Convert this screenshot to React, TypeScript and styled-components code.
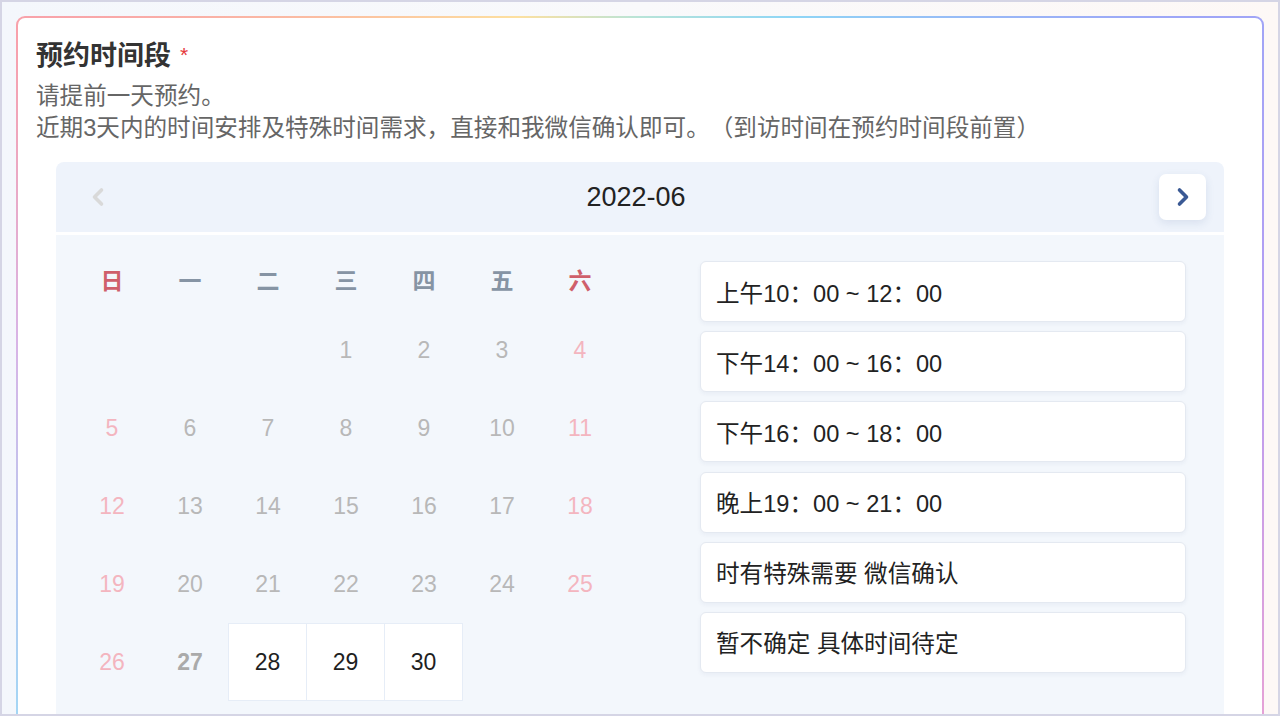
import React from 'react';
import styled, { createGlobalStyle } from 'styled-components';

// Global reset
const GlobalStyle = createGlobalStyle`
  * { box-sizing: border-box; }
  html, body { margin: 0; padding: 0; }
  body {
    font-family: "Liberation Sans", "Noto Sans CJK SC", sans-serif;
    background: #ffffff;
    text-spacing-trim: space-all;
  }
`;

// Typescript types
type DayKind = 'empty' | 'past' | 'today' | 'open';

interface DayCell {
  day?: number;
  kind: DayKind;
  weekend: boolean;
}

const weekDays: string[] = ['日', '一', '二', '三', '四', '五', '六'];

const slots: string[] = [
  '上午10：00 ~ 12：00',
  '下午14：00 ~ 16：00',
  '下午16：00 ~ 18：00',
  '晚上19：00 ~ 21：00',
  '时有特殊需要 微信确认',
  '暂不确定 具体时间待定',
];

// June 2022 starts on a Wednesday
const buildDays = (): DayCell[] => {
  const cells: DayCell[] = [];
  for (let i = 0; i < 3; i++) cells.push({ kind: 'empty', weekend: i === 0 });
  for (let d = 1; d <= 30; d++) {
    const col = (d + 2) % 7;
    let kind: DayKind = 'past';
    if (d === 27) kind = 'today';
    if (d > 27) kind = 'open';
    cells.push({ day: d, kind, weekend: col === 0 || col === 6 });
  }
  return cells;
};

// Styled-components
const Frame = styled.div`
  width: 100vw;
  height: 716px;
  overflow: hidden;
  border: 2px solid #d5d5e5;
  padding: 14px 14px 0;
  background: linear-gradient(90deg, #f4f7fc 0%, #f9f9fb 50%, #fdf8f6 100%);
`;

const Card = styled.section`
  min-height: 760px;
  border: 2px solid transparent;
  border-radius: 9px;
  padding: 19px 18px 0;
  background:
    linear-gradient(#ffffff, #ffffff) padding-box,
    conic-gradient(
      from 0deg at 50% 50%,
      #b8e4d8 0deg,
      #8fd6f6 22deg,
      #9ea6f7 55deg,
      #b79cf2 85deg,
      #e6a2d6 118deg,
      #f3a9bf 160deg,
      #f0b4c8 200deg,
      #9fd9f6 240deg,
      #d8b4e6 275deg,
      #f8a0ab 300deg,
      #fcc6a0 325deg,
      #fde0a0 342deg,
      #b8e4d8 360deg
    ) border-box;
`;

const Title = styled.h2`
  margin: 0;
  font-size: 27px;
  line-height: 36px;
  font-weight: 700;
  color: #333333;
`;

const Required = styled.span`
  color: #e5383b;
  font-size: 21px;
  font-weight: 400;
  margin-left: 9px;
  vertical-align: 3px;
`;

const Hint = styled.p`
  margin: 6px 0 0;
  font-size: 23.6px;
  line-height: 32px;
  color: #666666;
`;

const Calendar = styled.div`
  margin: 18px 20px 0;
`;

const CalHeader = styled.div`
  height: 70px;
  display: flex;
  align-items: center;
  justify-content: space-between;
  padding: 0 18px;
  background: #eef3fb;
  border-radius: 8px 8px 0 0;
`;

const MonthLabel = styled.div`
  font-size: 27px;
  color: #222222;
  margin-right: 8px;
`;

const NavButton = styled.button<{ $active?: boolean }>`
  width: 47px;
  height: 46px;
  display: flex;
  align-items: center;
  justify-content: center;
  border: none;
  border-radius: 7px;
  padding: 0;
  background: ${(p) => (p.$active ? '#ffffff' : 'transparent')};
  box-shadow: ${(p) => (p.$active ? '0 3px 8px rgba(60, 90, 150, 0.12)' : 'none')};
  color: ${(p) => (p.$active ? '#3a5994' : '#d9d9d9')};
`;

const CalBody = styled.div`
  margin-top: 3px;
  min-height: 520px;
  background: #f3f7fc;
  display: flex;
  gap: 81px;
  padding: 15px 38px 20px 17px;
`;

const DayGrid = styled.div`
  width: 546px;
  display: grid;
  grid-template-columns: repeat(7, 78px);
  grid-template-rows: 61px;
  grid-auto-rows: 78px;
  align-content: start;
`;

const WeekLabel = styled.div<{ $weekend: boolean }>`
  display: flex;
  align-items: center;
  justify-content: center;
  padding-bottom: 3px;
  font-size: 23px;
  font-weight: 700;
  color: ${(p) => (p.$weekend ? '#cf5f6b' : '#8694a4')};
`;

const Day = styled.div<{ $kind: DayKind; $weekend: boolean }>`
  display: flex;
  align-items: center;
  justify-content: center;
  font-size: 23px;
  font-weight: ${(p) => (p.$kind === 'today' ? 700 : 400)};
  color: ${(p) =>
    p.$kind === 'open'
      ? '#1f1f1f'
      : p.$weekend
      ? '#f3b5bf'
      : p.$kind === 'today'
      ? '#aaaaaa'
      : '#b8b8b8'};
  background: ${(p) => (p.$kind === 'open' ? '#ffffff' : 'transparent')};
  border: 1px solid ${(p) => (p.$kind === 'open' ? '#e6edf7' : 'transparent')};
  margin-left: ${(p) => (p.$kind === 'open' ? '-1px' : '0')};
`;

const SlotList = styled.div`
  flex: 1;
  display: flex;
  flex-direction: column;
  gap: 9.2px;
  padding-top: 11px;
`;

const Slot = styled.div`
  height: 61px;
  display: flex;
  align-items: center;
  padding-left: 15px;
  background: #ffffff;
  border: 1px solid #e4e9f1;
  border-radius: 6px;
  box-shadow: 0 2px 4px rgba(40, 60, 110, 0.05);
  font-size: 23.6px;
  color: #222222;
`;

const Chevron = ({ dir }: { dir: 'left' | 'right' }) => (
  <svg width="14" height="20" viewBox="0 0 14 20" fill="none">
    <polyline
      points={dir === 'right' ? '3.5,3 10.5,10 3.5,17' : '10.5,3 3.5,10 10.5,17'}
      stroke="currentColor"
      strokeWidth="3.6"
      strokeLinecap="round"
      strokeLinejoin="round"
    />
  </svg>
);

// Component
export default function App() {
  const days = buildDays();
  return (
    <>
      <GlobalStyle />
      <Frame>
        <Card>
          <Title>
            预约时间段<Required>*</Required>
          </Title>
          <Hint>
            请提前一天预约。
            <br />
            近期3天内的时间安排及特殊时间需求，直接和我微信确认即可。（到访时间在预约时间段前置）
          </Hint>
          <Calendar>
            <CalHeader>
              <NavButton aria-label="上个月">
                <Chevron dir="left" />
              </NavButton>
              <MonthLabel>2022-06</MonthLabel>
              <NavButton $active aria-label="下个月">
                <Chevron dir="right" />
              </NavButton>
            </CalHeader>
            <CalBody>
              <DayGrid>
                {weekDays.map((w, i) => (
                  <WeekLabel key={w} $weekend={i === 0 || i === 6}>
                    {w}
                  </WeekLabel>
                ))}
                {days.map((d, i) => (
                  <Day key={i} $kind={d.kind} $weekend={d.weekend}>
                    {d.day}
                  </Day>
                ))}
              </DayGrid>
              <SlotList>
                {slots.map((s) => (
                  <Slot key={s}>{s}</Slot>
                ))}
              </SlotList>
            </CalBody>
          </Calendar>
        </Card>
      </Frame>
    </>
  );
}
